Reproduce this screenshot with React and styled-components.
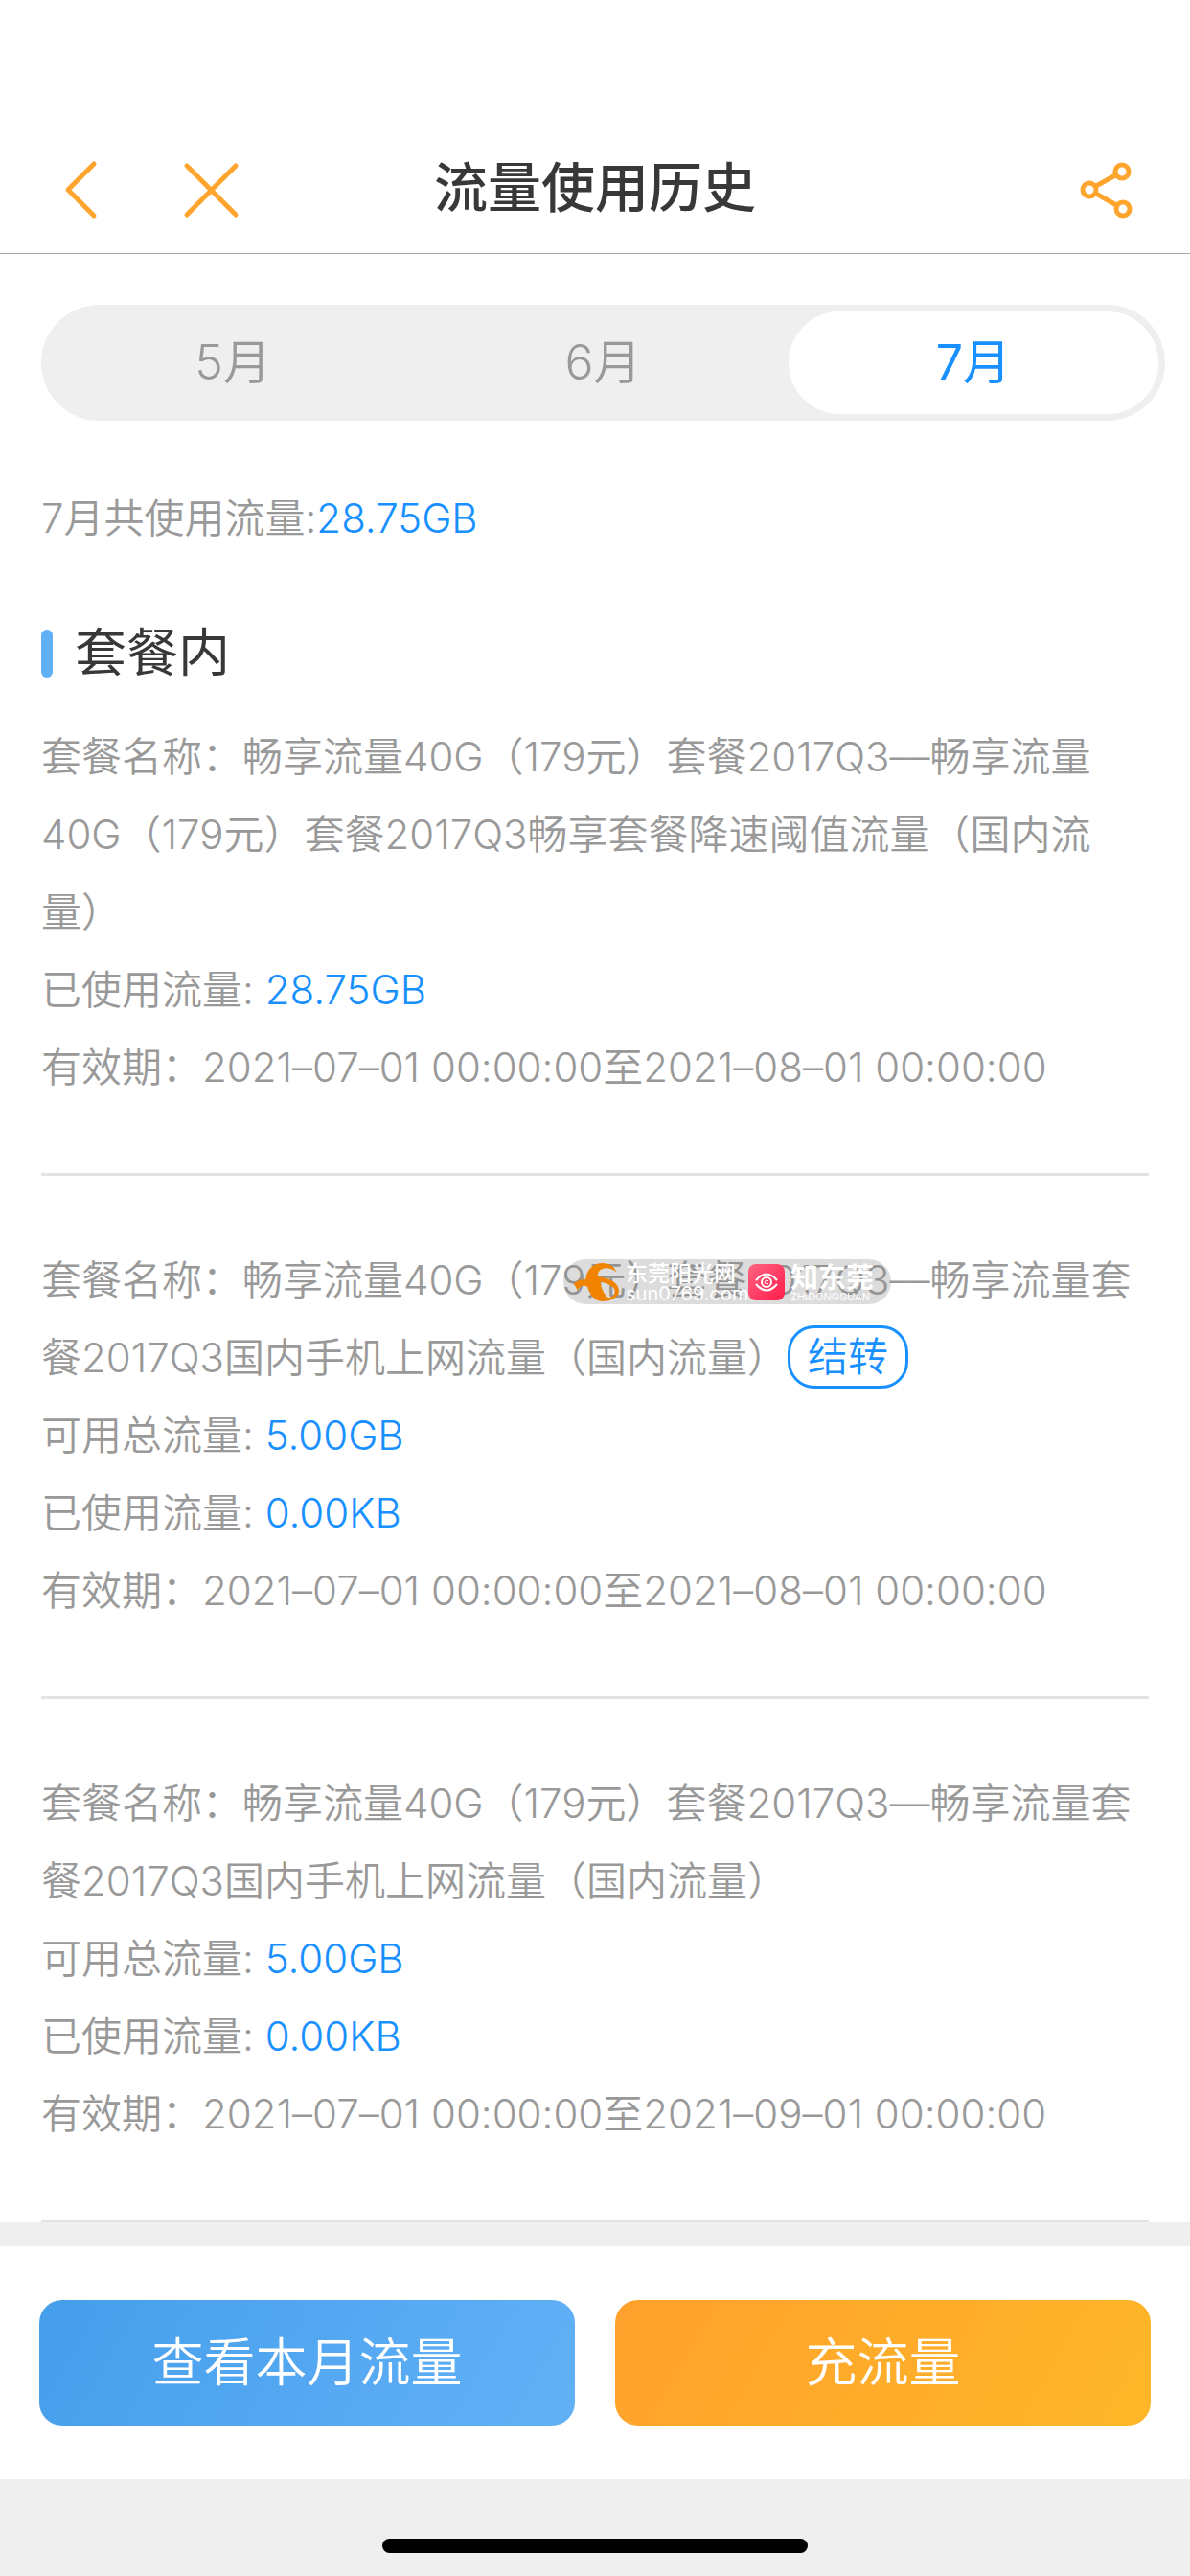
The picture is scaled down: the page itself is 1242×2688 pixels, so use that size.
import { useState } from 'react';
import styled, { createGlobalStyle } from 'styled-components';

const GlobalStyle = createGlobalStyle`
  * {
    box-sizing: border-box;
  }

  body {
    margin: 0;
    background: #fff;
    color: #999;
    font-family: Inter, 'Noto Sans CJK SC', sans-serif;
    font-size: 42px;
    font-weight: 350;
    font-variant-ligatures: none;
    line-height: 81px;
  }

  button {
    border: 0;
    padding: 0;
    background: none;
    color: inherit;
    font: inherit;
    cursor: pointer;
  }
`;

const Page = styled.div`
  min-height: 100vh;
  display: flex;
  flex-direction: column;
`;

const Header = styled.header`
  display: grid;
  grid-template-columns: 1fr auto 1fr;
  align-items: center;
  padding: 132px 54px 0;
  height: 265px;
  border-bottom: 1px solid #a8a8a8;
`;

const HeaderGroup = styled.div`
  display: flex;
  gap: 60px;
  justify-content: ${({ $end }) => ($end ? 'flex-end' : 'flex-start')};
`;

const IconButton = styled.button`
  display: flex;
  width: 66px;
  height: 66px;
  color: #ffa42d;

  svg {
    width: 100%;
    height: 100%;
    overflow: visible;
    fill: none;
    stroke: currentColor;
    stroke-width: 5;
    stroke-linecap: round;
    stroke-linejoin: round;
  }
`;

const Title = styled.h1`
  margin: 0;
  padding-bottom: 4px;
  color: #383838;
  font-size: 56px;
  font-weight: 500;
`;

const Main = styled.main`
  padding: 53px 43px 0;
`;

const Tabs = styled.div`
  display: flex;
  margin-right: -17px;
  padding: 7px;
  border-radius: 61px;
  background: #efefef;
`;

const Tab = styled.button`
  flex: 1;
  height: 107px;
  border-radius: 54px;
  font-size: 50px;

  &[aria-selected='true'] {
    background: #fff;
    color: #1890ff;
    font-weight: 400;
  }
`;

const Summary = styled.p`
  margin: 61px 0 0;
`;

const Value = styled.span`
  color: #1890ff;
`;

const SectionTitle = styled.h2`
  display: flex;
  align-items: center;
  gap: 23px;
  margin: 60px 0 27px;
  color: #383838;
  font-size: 54px;
  font-weight: 400;

  &::before {
    content: '';
    width: 12px;
    height: 50px;
    border-radius: 6px;
    background: #60b0f6;
  }
`;

const Plan = styled.section`
  position: relative;
  padding: ${({ $first }) => ($first ? '0' : '68px')} 0 70px;
  border-bottom: 3px solid #e3e3e3;
`;

const Line = styled.p`
  margin: 0;
`;

const RollOver = styled.button`
  height: 66px;
  margin-top: 7px;
  padding: 0 18px;
  border: 3px solid #1890ff;
  border-radius: 28px;
  color: #1890ff;
  line-height: 60px;
  vertical-align: top;
`;

const Footer = styled.footer`
  display: flex;
  gap: 42px;
  padding: 56px 41px;
  border-top: 25px solid #efefef;
`;

const Action = styled.button`
  flex: 1;
  height: 131px;
  border-radius: 24px;
  background: linear-gradient(120deg, ${({ $from }) => $from}, ${({ $to }) => $to});
  color: #fff;
  font-size: 54px;
`;

const HomeArea = styled.div`
  flex: 1;
  display: flex;
  justify-content: center;
  align-items: flex-end;
  min-height: 101px;
  padding-bottom: 24px;
  background: #efefef;
`;

const HomeBar = styled.div`
  width: 444px;
  height: 15px;
  border-radius: 8px;
  background: #000;
`;

// sits over the first line of a plan
const Stamp = styled.div`
  position: absolute;
  top: 87px;
  left: 545px;
  display: flex;
  align-items: center;
  gap: 6px;
  height: 47px;
  padding: 0 17px 0 10px;
  border-radius: 24px;
  background: rgba(140, 140, 140, 0.3);
  color: #fff;
`;

const StampBrand = styled.div`
  display: flex;
  flex-direction: column;
  width: ${({ $width }) => $width}px;
  font-size: ${({ $size }) => $size}px;
  font-weight: ${({ $bold }) => ($bold ? 700 : 500)};
  line-height: ${({ $bold }) => ($bold ? 31 : 24)}px;
  white-space: nowrap;
`;

const StampLatin = styled.span`
  font-size: ${({ $size }) => $size}px;
  font-weight: 400;
  line-height: ${({ $size }) => $size - 2}px;
`;

const months = ['5月', '6月', '7月'];

const plans = [
  {
    name: '畅享流量40G（179元）套餐2017Q3––畅享流量40G（179元）套餐2017Q3畅享套餐降速阈值流量（国内流量）',
    used: '28.75GB',
    until: '2021–08–01',
  },
  {
    name: '畅享流量40G（179元）套餐2017Q3––畅享流量套餐2017Q3国内手机上网流量（国内流量）',
    rollOver: true,
    stamped: true,
    total: '5.00GB',
    used: '0.00KB',
    until: '2021–08–01',
  },
  {
    name: '畅享流量40G（179元）套餐2017Q3––畅享流量套餐2017Q3国内手机上网流量（国内流量）',
    total: '5.00GB',
    used: '0.00KB',
    until: '2021–09–01',
  },
];

function SourceStamp() {
  return (
    <Stamp>
      <svg width="49" height="40" viewBox="37 38 147 120">
        <path
          fill="#f08300"
          fillRule="evenodd"
          d="M173 66C155 52 132 50 120 62C115 68 114 76 114 81C145 82 180 98 181 125C181 145 155 158 132 158C108 158 90 140 82 112C70 106 58 110 50 124C48 115 44 108 38 104C50 92 62 90 77 88C80 55 105 38 130 38C150 38 168 50 173 66ZM123 97C127 124 137 140 150 147C167 141 173 128 164 116C154 105 139 99 123 97Z"
        />
      </svg>
      <StampBrand $size={23} $width={122}>
        东莞阳光网
        <StampLatin $size={20}>sun0769.com</StampLatin>
      </StampBrand>
      <svg width="38" height="38" viewBox="0 0 38 38">
        <defs>
          <linearGradient id="eye" x1="0" y1="0" x2="1" y2="1">
            <stop offset="0" stopColor="#ff6482" />
            <stop offset="1" stopColor="#ff1c4b" />
          </linearGradient>
        </defs>
        <rect width="38" height="38" rx="8" fill="url(#eye)" />
        <g fill="none" stroke="#fff" strokeWidth="2">
          <path d="M8 17Q19 4 30 17M8 21Q19 34 30 21" />
          <circle cx="19" cy="19" r="5" />
          <path strokeWidth="1" d="M21 18a2 2 0 1 0 0 2" />
        </g>
      </svg>
      <StampBrand $size={29} $width={88} $bold>
        知东莞
        <StampLatin $size={11}>ZHIDONGGUAN</StampLatin>
      </StampBrand>
    </Stamp>
  );
}

function PlanItem({ plan, first }) {
  return (
    <Plan $first={first}>
      <Line>
        {`套餐名称：${plan.name}`}
        {plan.rollOver && <RollOver type="button">结转</RollOver>}
      </Line>
      {plan.total && (
        <Line>
          可用总流量: <Value>{plan.total}</Value>
        </Line>
      )}
      <Line>
        已使用流量: <Value>{plan.used}</Value>
      </Line>
      <Line>{`有效期：2021–07–01 00:00:00至${plan.until} 00:00:00`}</Line>
      {plan.stamped && <SourceStamp />}
    </Plan>
  );
}

export default function App() {
  const [month, setMonth] = useState('7月');

  return (
    <Page>
      <GlobalStyle />
      <Header>
        <HeaderGroup>
          <IconButton type="button" aria-label="返回">
            <svg viewBox="0 0 66 66">
              <path d="M44 6L17 33L44 60" />
            </svg>
          </IconButton>
          <IconButton type="button" aria-label="关闭">
            <svg viewBox="0 0 66 66">
              <path d="M15 8L66 59M66 8L15 59" />
            </svg>
          </IconButton>
        </HeaderGroup>
        <Title>流量使用历史</Title>
        <HeaderGroup $end>
          <IconButton type="button" aria-label="分享">
            <svg viewBox="0 0 66 66">
              <circle cx="15" cy="33" r="7" />
              <circle cx="49" cy="14" r="7" />
              <circle cx="50" cy="53" r="7" />
              <path d="M22 29L42 18M22 37L43 49" />
            </svg>
          </IconButton>
        </HeaderGroup>
      </Header>
      <Main>
        <Tabs role="tablist">
          {months.map((item) => (
            <Tab
              key={item}
              type="button"
              role="tab"
              aria-selected={item === month}
              onClick={() => setMonth(item)}
            >
              {item}
            </Tab>
          ))}
        </Tabs>
        <Summary>
          7月共使用流量:<Value>28.75GB</Value>
        </Summary>
        <SectionTitle>套餐内</SectionTitle>
        {plans.map((plan, index) => (
          <PlanItem key={index} plan={plan} first={index === 0} />
        ))}
      </Main>
      <Footer>
        <Action type="button" $from="#459eeb" $to="#62b1f7">
          查看本月流量
        </Action>
        <Action type="button" $from="#ffa12c" $to="#ffb728">
          充流量
        </Action>
      </Footer>
      <HomeArea>
        <HomeBar />
      </HomeArea>
    </Page>
  );
}
